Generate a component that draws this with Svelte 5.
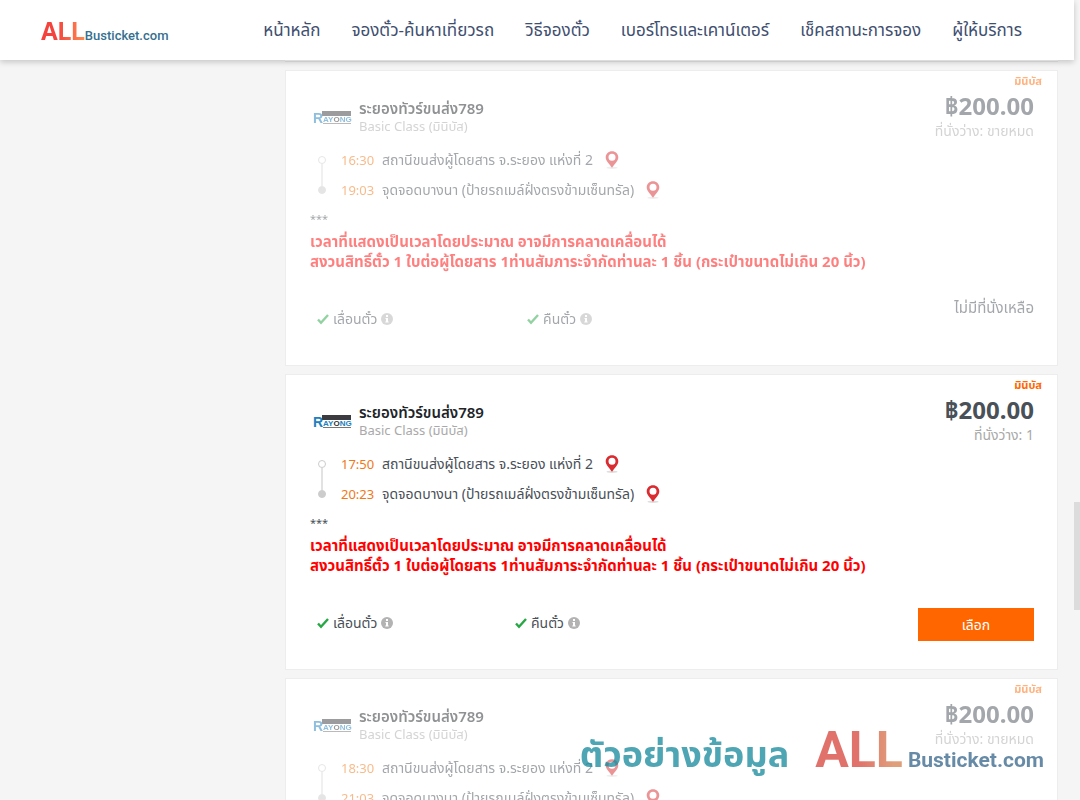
<script lang="ts">
    interface Trip {
        id: number;
        depart: string;
        arrive: string;
        seats: number;
    }

    const navLinks: string[] = [
        'หน้าหลัก',
        'จองตั๋ว-ค้นหาเที่ยวรถ',
        'วิธีจองตั๋ว',
        'เบอร์โทรและเคาน์เตอร์',
        'เช็คสถานะการจอง',
        'ผู้ให้บริการ'
    ];

    const trips: Trip[] = [
        { id: 1, depart: '16:30', arrive: '19:03', seats: 0 },
        { id: 2, depart: '17:50', arrive: '20:23', seats: 1 },
        { id: 3, depart: '18:30', arrive: '21:03', seats: 0 }
    ];

    const perks: string[] = ['เลื่อนตั๋ว', 'คืนตั๋ว'];

    let selectedId = $state<number | null>(null);
</script>

{#snippet pin()}
    <svg class="pin" viewBox="0 0 14 18" aria-hidden="true">
        <ellipse cx="7" cy="16.8" rx="5.5" ry="1.1" fill="#dedede" />
        <path
            d="M7 .3C3.4.3.7 3 .7 6.4c0 3.2 3.8 6.6 6.3 10.3 2.5-3.700 6.300-7.100 6.300-10.300C13.300 3 10.600.3 7 .3zm0 9.500a3.500 3.500 0 1 1 0-7 3.500 3.500 0 0 1 0 7z"
            fill="#d92b30"
        />
    </svg>
{/snippet}

<div class="page">
    <header class="topbar">
        <a class="brand" href="#home">
            <span class="brand-all">ALL</span><span class="brand-name">Busticket.com</span>
        </a>
        <nav>
            {#each navLinks as link}
                <a href="#menu">{link}</a>
            {/each}
        </nav>
    </header>

    <main class="results">
        <div class="previous"></div>
        {#each trips as trip (trip.id)}
            <article class="card" class:sold-out={trip.seats === 0}>
                <div class="bus-type">มินิบัส</div>
                <div class="summary">
                    <div class="operator">
                        <svg class="logo" viewBox="0 0 40 18" role="img" aria-label="Rayong">
                            <rect x="9" y="3" width="29" height="5" fill="#3b3b40" />
                            <rect x="10" y="15" width="28" height="1" fill="#777" />
                            <text x="0" y="15" class="logo-big">R</text>
                            <text x="10" y="14" class="logo-small">AY<tspan fill="#333">O</tspan>NG</text>
                        </svg>
                        <div>
                            <h2>ระยองทัวร์ขนส่ง789</h2>
                            <p class="muted">Basic Class (มินิบัส)</p>
                        </div>
                    </div>
                    <div class="fare">
                        <strong>฿200.00</strong>
                        <p class="muted">ที่นั่งว่าง: {trip.seats || 'ขายหมด'}</p>
                    </div>
                </div>

                <ol class="stops">
                    <li>
                        <span class="dot"></span>
                        <time>{trip.depart}</time>
                        <span>สถานีขนส่งผู้โดยสาร จ.ระยอง แห่งที่ 2</span>
                        {@render pin()}
                    </li>
                    <li>
                        <span class="dot end"></span>
                        <time>{trip.arrive}</time>
                        <span>จุดจอดบางนา (ป้ายรถเมล์ฝั่งตรงข้ามเซ็นทรัล)</span>
                        {@render pin()}
                    </li>
                </ol>

                <div class="notes">
                    <p class="stars">***</p>
                    <p class="warning">เวลาที่แสดงเป็นเวลาโดยประมาณ อาจมีการคลาดเคลื่อนได้</p>
                    <p class="warning">
                        สงวนสิทธิ์ตั๋ว 1 ใบต่อผู้โดยสาร 1ท่านสัมภาระจำกัดท่านละ 1 ชิ้น (กระเป๋าขนาดไม่เกิน 20 นิ้ว)
                    </p>
                </div>

                <div class="actions">
                    <ul class="perks">
                        {#each perks as perk}
                            <li>
                                <svg class="check" viewBox="0 0 12 12" aria-hidden="true">
                                    <path d="M1 6.5l3 3.3L11 2" fill="none" stroke="#28a745" stroke-width="2.4" />
                                </svg>
                                <span>{perk}</span>
                                <svg class="info" viewBox="0 0 12 12" aria-hidden="true">
                                    <circle cx="6" cy="6" r="6" fill="#b3b3b3" />
                                    <path d="M5 2h2v2H5zM4.500 5H7v3.500h.7v1H4.300v-1H5V6h-.5z" fill="#fff" />
                                </svg>
                            </li>
                        {/each}
                    </ul>
                    {#if trip.seats > 0}
                        <button type="button" onclick={() => (selectedId = trip.id)}>เลือก</button>
                    {:else}
                        <span class="no-seats">ไม่มีที่นั่งเหลือ</span>
                    {/if}
                </div>
            </article>
        {/each}
    </main>

    <div class="scroll-thumb"></div>

    <div class="watermark">
        <span class="sample">ตัวอย่างข้อมูล</span>
        <span class="brand-all">ALL</span>
        <span class="brand-name">Busticket.com</span>
    </div>
</div>

<style>
    :global(body) {
        background: #f5f5f5;
    }

    .page {
        position: relative;
        box-sizing: border-box;
        height: 100vh;
        padding-right: 6px;
        overflow: hidden;
        font-family: 'Noto Sans', 'Noto Sans Thai', sans-serif;
        font-size: 14px;
        line-height: 20px;
        color: #495057;
    }

    h2,
    p,
    ol,
    ul {
        margin: 0;
        padding: 0;
        list-style: none;
    }

    .topbar {
        position: relative;
        z-index: 1;
        display: flex;
        align-items: center;
        justify-content: space-between;
        height: 60px;
        padding: 0 52px 0 41px;
        background: #fff;
        box-shadow: 0 2px 6px rgba(0, 0, 0, 0.2);
        box-sizing: border-box;
    }

    .topbar a {
        color: #3f4f70;
        text-decoration: none;
        white-space: nowrap;
    }

    .topbar nav {
        display: flex;
        gap: 31px;
        font-size: 17px;
    }

    .brand,
    .watermark {
        display: flex;
        align-items: baseline;
        font-family: Roboto, sans-serif;
        font-weight: 700;
    }

    .brand {
        padding-top: 7px;
    }

    .brand-all {
        font-size: 25px;
        color: transparent;
        background: linear-gradient(90deg, #f4433c 35%, #ff8a50);
        background-clip: text;
    }

    .topbar .brand-name {
        font-size: 13px;
        font-weight: 500;
        color: #35708f;
    }

    .results {
        display: flex;
        flex-direction: column;
        gap: 8px;
        margin: 0 16px 0 285px;
    }

    .previous {
        height: 1px;
        background: #fff;
        border-bottom: 1px solid #e6e6e6;
    }

    .card {
        position: relative;
        box-sizing: border-box;
        flex-shrink: 0;
        padding: 23px 23px 28px 24px;
        background: #fff;
        border: 1px solid #ededed;
    }

    .card.sold-out > * {
        opacity: 0.5;
    }

    .bus-type {
        position: absolute;
        top: 0;
        right: 15px;
        font-size: 11px;
        font-weight: 700;
        color: #f60;
    }

    .summary,
    .operator,
    .stops li,
    .actions,
    .perks li {
        display: flex;
    }

    .summary {
        align-items: flex-start;
        justify-content: space-between;
    }

    .operator {
        align-items: center;
        gap: 6px;
        padding: 5px 0 0 3px;
        line-height: 18px;
    }

    .operator h2 {
        font-size: 15px;
        font-weight: 600;
        color: #212529;
    }

    .operator .muted {
        font-size: 13px;
    }

    .logo {
        width: 40px;
        height: 18px;
    }

    .logo-big,
    .logo-small {
        font-family: 'Liberation Sans', sans-serif;
        font-weight: 700;
        fill: #2180be;
    }

    .logo-big {
        font-size: 14px;
    }

    .logo-small {
        font-size: 8px;
    }

    .muted {
        color: #a9a9a9;
    }

    .fare {
        text-align: right;
    }

    .fare strong {
        display: block;
        margin-bottom: 3px;
        font-size: 24px;
        line-height: 24px;
    }

    .stops {
        margin-top: 4px;
    }

    .stops li {
        position: relative;
        align-items: center;
        height: 30px;
        padding-left: 8px;
    }

    .stops time {
        width: 33px;
        margin: 0 8px 0 15px;
        font-size: 13px;
        color: #f07818;
    }

    .dot {
        box-sizing: border-box;
        width: 8px;
        height: 8px;
        border: 1px solid #ccc;
        border-radius: 50%;
    }

    .dot.end {
        background: #ccc;
    }

    .dot.end::before {
        position: absolute;
        top: -11px;
        left: 11px;
        width: 2px;
        height: 22px;
        background: #e2e2e2;
        content: '';
    }

    .pin {
        width: 14px;
        height: 18px;
        margin-left: 12px;
    }

    .notes {
        margin-top: 4px;
    }

    .stars {
        margin-bottom: 2px;
        font-size: 11px;
    }

    .warning {
        font-size: 15px;
        font-weight: 700;
        color: #f00;
    }

    .actions {
        align-items: flex-start;
        justify-content: space-between;
        gap: 7px;
        height: 40px;
        margin-top: 26px;
    }

    .perks {
        display: grid;
        flex: 1;
        grid-template-columns: repeat(3, 1fr);
        padding: 12px 0 0 7px;
    }

    .perks li {
        align-items: center;
        gap: 4px;
    }

    .check,
    .info {
        width: 12px;
        height: 12px;
    }

    .actions button {
        width: 116px;
        height: 33px;
        margin-top: 7px;
        border: 0;
        background: #f60;
        color: #fff;
        font: inherit;
        cursor: pointer;
    }

    .no-seats {
        font-size: 15px;
    }

    .scroll-thumb {
        position: absolute;
        top: 502px;
        right: 0;
        width: 6px;
        height: 108px;
        background: #dcdcdc;
    }

    .watermark {
        position: absolute;
        right: 36px;
        bottom: 16px;
        z-index: 2;
        line-height: 48px;
        opacity: 0.75;
        pointer-events: none;
    }

    .watermark .sample {
        margin-right: 26px;
        font-family: 'Noto Sans', 'Noto Sans Thai', sans-serif;
        font-size: 36px;
        color: #13879a;
    }

    .watermark .brand-all {
        font-size: 50px;
        background-image: linear-gradient(90deg, #d6443a 50%, #d6804f 90%);
    }

    .watermark .brand-name {
        margin-left: 5px;
        font-size: 21px;
        color: #35658a;
    }
</style>
